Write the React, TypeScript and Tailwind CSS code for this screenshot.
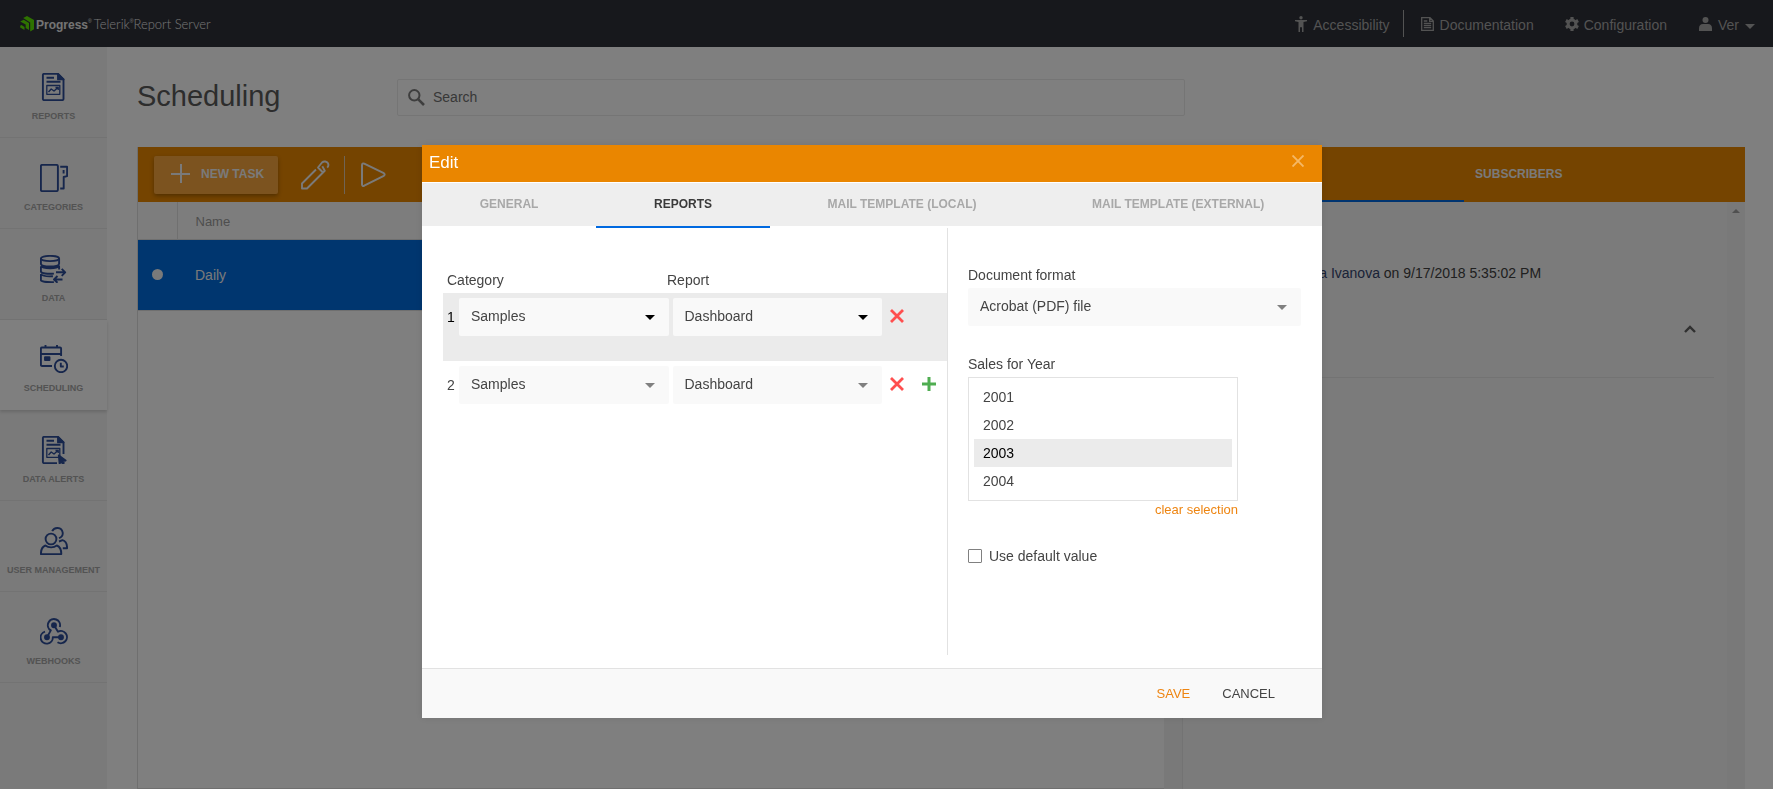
import type { ReactNode } from "react";

function NavIcon({ children }: { children: ReactNode }) {
  return (
    <svg
      width="28"
      height="28"
      viewBox="0 0 28 28"
      fill="none"
      stroke="#2d4d98"
      strokeWidth="1.900"
      strokeLinejoin="round"
      aria-hidden="true"
    >
      {children}
    </svg>
  );
}

function ReportShapes() {
  return (
    <>
      <path d="M18 .9l5.500 5.500H18z" fill="#2d4d98" />
      <path d="M6.500 4.800h7.500M6.500 8.800h14" />
      <rect x="6.800" y="12.500" width="13" height="8.800" strokeWidth="1.300" />
      <path d="M8.500 19l2.700-3 2.800 2 4-3.500M15.500 14.500h2.700v2.500" strokeWidth="1.400" />
    </>
  );
}

const navItems: { label: string; icon: ReactNode; active?: boolean }[] = [
  {
    label: "REPORTS",
    icon: (
      <NavIcon>
        <path d="M4 .9h14l5.500 5.500V26q0 1.100-1.100 1.100H4q-1.100 0-1.100-1.100V2Q2.900.9 4 .9z" />
        <ReportShapes />
      </NavIcon>
    ),
  },
  {
    label: "CATEGORIES",
    icon: (
      <NavIcon>
        <rect x=".9" y=".9" width="17" height="26.200" rx="1.300" />
        <path d="M20.200 2.800h6.900v9.400l-3.400.8v11.500h-3.500M23.600 9.500V6" />
      </NavIcon>
    ),
  },
  {
    label: "DATA",
    icon: (
      <NavIcon>
        <ellipse cx="10" cy="3.500" rx="9.100" ry="2.600" />
        <path d="M.9 3.500v5.200c0 3.600 18.200 3.600 18.200 0V3.500M.9 11.200v5c0 2.200 7 3 13 2.400M.9 11.200c2 2.600 16 2.800 18.200 0v3.300M.9 19v6c0 1.500 5 2.300 13 2.100M.9 19c2 2.300 8 2.500 12 2.200" />
        <path d="M16 17.300h9M21.700 13.800l3.500 3.500-3.500 3.500M22.500 24.500H14M17.500 21l-3.500 3.500 3.500 3.300" />
      </NavIcon>
    ),
  },
  {
    label: "SCHEDULING",
    active: true,
    icon: (
      <NavIcon>
        <path d="M12 21H2q-1.100 0-1.100-1.100V3.600Q.9 2.500 2 2.500h18q1.100 0 1.100 1.100V11M.9 9h20.200M5.500 0v2.500M17 0v2.500" />
        <rect x="5" y="12.300" width="4.500" height="2.800" fill="#2d4d98" />
        <circle cx="21" cy="21" r="6.200" />
        <path d="M20.800 17.800v3.700h3" />
      </NavIcon>
    ),
  },
  {
    label: "DATA ALERTS",
    icon: (
      <NavIcon>
        <path d="M17 27.100H4q-1.100 0-1.100-1.100V2Q2.900.9 4 .9h14l5.500 5.500V18" />
        <ReportShapes />
        <path d="M18.800 19.500l6.800 5-3 .5 1.200 2-1 .6-1.400-2-1.800 1.800z" fill="#2d4d98" />
      </NavIcon>
    ),
  },
  {
    label: "USER MANAGEMENT",
    icon: (
      <NavIcon>
        <circle cx="11" cy="12" r="5.400" />
        <path d="M.9 27.100h20.400c0-4.500-1.500-7.500-4.500-8.600-3 2.500-8.400 2.500-11.400 0C2.400 19.600.9 22.600.9 27.100z" />
        <path d="M12.200 4.200c2-4.500 9.500-4.500 10.500 1.500.3 2.500-1 4.500-3.700 5.500M19 14.500l3.500-1.300c3.300.8 4.600 4.500 4.600 8h-4.300" />
      </NavIcon>
    ),
  },
  {
    label: "WEBHOOKS",
    icon: (
      <NavIcon>
        <g fill="#2d4d98">
          <circle cx="14" cy="7.200" r="2" />
          <circle cx="7" cy="19.200" r="2" />
          <circle cx="21" cy="19.200" r="2" />
        </g>
        <path d="M19.800 8.900A6.100 6.100 0 1 0 10.800 12.400L7 19.200M5 13.700A6.100 6.100 0 1 0 12.800 19.200H21M17.500 24.200A6.100 6.100 0 1 0 18 13.700L14 7.200" />
      </NavIcon>
    ),
  },
];

function TopBar() {
  return (
    <header className="flex h-[47px] shrink-0 items-center bg-[#2e3038] text-sm text-[#a6a6a6]">
      <a href="#home" className="flex items-center pl-5 text-[#e8e8e8]">
        <svg width="14" height="16" viewBox="0 0 14 16" fill="#5ce500" aria-hidden="true">
          <path d="M3.200 2L7 0l7 3.900v9.300l-3.800 2.300V6.400z" />
          <path d="M.2 5.400L3.800 3.700 9 6.900v7.200l-3.300-2V8.500z" />
          <path d="M.2 9.800l1.300-.7 3 1.800v3L.2 11.600z" />
        </svg>
        <span className="ml-[2px] pt-[2px] text-xs font-bold">Progress</span>
        <sup className="text-[5px]">®</sup>
        <span className="ml-[2px] pt-[2px] font-['Lato'] text-[13px] font-light">Telerik</span>
        <sup className="text-[5px]">®</sup>
        <span className="pt-[2px] font-['Lato'] text-[13px] font-light">Report Server</span>
      </a>
      <nav className="ml-auto flex items-center pt-[3px] pr-[18px]">
        <a href="#accessibility" className="flex items-center gap-[6px]">
          <svg width="12" height="16" viewBox="0 0 12 16" fill="currentColor" className="-mt-[2px]" aria-hidden="true">
            <circle cx="6" cy="1.800" r="1.700" />
            <path d="M0 4h12v1.300l-3.500.6V16H7v-4.800H5V16H3.500V5.900L0 5.300z" />
          </svg>
          Accessibility
        </a>
        <span className="-mt-[3px] ml-[13px] h-[27px] w-px bg-[#a6a6a6]" />
        <a href="#documentation" className="ml-[17px] flex items-center gap-[6px]">
          <svg
            width="13"
            height="14"
            viewBox="0 0 13 14"
            fill="none"
            stroke="currentColor"
            strokeWidth="1.300"
            className="-mt-[2px]"
            aria-hidden="true"
          >
            <path d="M.7.700h8.300l3.300 3.300v9.300H.7zM8.700.7v3.600h3.600M2.800 4h3.500M2.800 6.300h7.400M2.800 8.500h7.400M2.800 10.700h7.400" />
          </svg>
          Documentation
        </a>
        <a href="#configuration" className="ml-[31px] flex items-center gap-[5px]">
          <svg width="14" height="14" viewBox="0 0 14 14" className="-mt-[2px]" aria-hidden="true">
            <circle cx="7" cy="7" r="3.900" fill="none" stroke="currentColor" strokeWidth="3" />
            <path
              d="M7 0v2.500M7 11.500V14M.9 3.500l2.200 1.300M10.900 9.200l2.200 1.300M.9 10.500l2.200-1.300M10.900 4.800l2.200-1.300"
              stroke="currentColor"
              strokeWidth="3.200"
            />
          </svg>
          Configuration
        </a>
        <button type="button" className="ml-8 flex items-center gap-[6px]">
          <svg width="13" height="14" viewBox="0 0 13 14" fill="currentColor" className="-mt-[2px]" aria-hidden="true">
            <circle cx="6.500" cy="3" r="3" />
            <path d="M0 14v-2.500Q0 7 4 7h5q4 0 4 4.500V14z" />
          </svg>
          Ver
          <svg width="10" height="5" viewBox="0 0 10 5" fill="currentColor" className="mt-[3px]" aria-hidden="true">
            <path d="M0 0h10L5 5z" />
          </svg>
        </button>
      </nav>
    </header>
  );
}

function SideBar() {
  return (
    <nav className="w-[107px] shrink-0 bg-[#f4f4f4]">
      {navItems.map((item) => (
        <a
          key={item.label}
          href="#section"
          className={
            item.active
              ? "relative flex h-[90px] flex-col items-center bg-white pt-[25px] text-[9px] font-bold text-[#a6a6a6] shadow-[0_2px_3px_rgba(0,0,0,0.15)]"
              : "flex h-[91px] flex-col items-center border-b border-[#e6e6e6] pt-[26px] text-[9px] font-bold text-[#a6a6a6]"
          }
        >
          {item.icon}
          <span className="mt-[9px] leading-3 whitespace-nowrap">{item.label}</span>
        </a>
      ))}
    </nav>
  );
}

function TaskList() {
  return (
    <section className="flex-1 border-b border-l border-[#dedede]">
      <div className="flex h-[55px] items-center bg-[#ea8800] pl-4 text-[#f4f4f4]">
        <button
          type="button"
          className="flex h-[38px] w-[124px] items-center rounded-xs bg-[#f8a63e] pb-[2px] pl-[17px] text-xs font-bold shadow-[0_2px_4px_rgba(0,0,0,0.3)]"
        >
          <svg width="19" height="19" viewBox="0 0 19 19" stroke="currentColor" strokeWidth="2" aria-hidden="true">
            <path d="M0 10h19M10 0v19" />
          </svg>
          <span className="ml-[11px]">NEW TASK</span>
        </button>
        <button type="button" aria-label="Edit task" className="ml-[22px]">
          <svg
            width="30"
            height="30"
            viewBox="0 0 30 30"
            fill="none"
            stroke="currentColor"
            strokeWidth="1.900"
            strokeLinejoin="round"
            aria-hidden="true"
          >
            <path d="M16 9.500L2 23.500v5h5L23.500 12M17.500 7l5.500 5.500 1.800-1.700-2.500-4.500M18 7.500l4-5c1.800-1.700 4.800-1.200 6 .8.800 1.700.3 3.200-.8 4.300" />
          </svg>
        </button>
        <span className="ml-[14px] h-[38px] w-px bg-[#e0c8a8]" />
        <button type="button" aria-label="Run task" className="ml-[15px]">
          <svg
            width="26"
            height="26"
            viewBox="0 0 26 26"
            fill="none"
            stroke="currentColor"
            strokeWidth="2"
            strokeLinejoin="round"
            aria-hidden="true"
          >
            <path d="M2 3q.2-2.200 2.200-1.300L23.800 11.200q1.700 1.300 0 2.600L4.200 23.700Q2.200 24.500 2 22.500z" />
          </svg>
        </button>
      </div>
      <table className="w-full border-collapse text-left">
        <thead>
          <tr className="h-[37px] border-b border-[#dedede] bg-[#fbfbfb] text-[13px] text-[#9c9c9c]">
            <th aria-label="Status" className="w-[39px] border-r border-[#e0e0e0]" />
            <th className="pt-[2px] pl-[18px] font-normal">Name</th>
          </tr>
        </thead>
        <tbody>
          <tr className="h-[71px] border-b border-[#dedede] bg-[#006cde] text-sm text-[#f4f4f4]">
            <td>
              <span className="mx-auto block size-[11px] rounded-full bg-[#f4f4f4]" />
            </td>
            <td className="pl-[18px]">Daily</td>
          </tr>
        </tbody>
      </table>
    </section>
  );
}

function DetailsPanel() {
  return (
    <section className="flex w-[35%] flex-col border-l border-[#e6e6e6] bg-[#f6f6f6]">
      <div role="tablist" className="flex h-[55px] bg-[#ea8800] text-xs font-bold text-[#f4f4f4]">
        <button type="button" role="tab" aria-label="Activities" className="w-1/2 border-b-2 border-[#0069e0]" />
        <button type="button" role="tab" className="px-[11px] pb-[2px]">
          SUBSCRIBERS
        </button>
      </div>
      <div className="flex flex-1">
        <div className="flex-1 pr-[13px] text-sm text-[#404040]">
          <p className="pt-[61px] pl-[136px] leading-5">
            <a href="#user" className="text-[#34456e]">
              a Ivanova
            </a>{" "}
            on 9/17/2018 5:35:02 PM
          </p>
          <div className="flex h-[95px] justify-end border-b border-[#e6e6e6] pr-[18px] pb-[2px]">
            <button type="button" aria-label="Collapse">
              <svg width="12" height="8" viewBox="0 0 12 8" fill="none" stroke="#606060" strokeWidth="2.400" aria-hidden="true">
                <path d="M1 7l5-5 5 5" />
              </svg>
            </button>
          </div>
        </div>
        <div className="w-[18px] bg-[#f2f2f2] pt-[7px]">
          <svg width="8" height="4" viewBox="0 0 8 4" fill="#a0a0a0" className="mx-auto" aria-hidden="true">
            <path d="M4 0l4 4H0z" />
          </svg>
        </div>
      </div>
    </section>
  );
}

function DropDown({ label, value, dark }: { label: string; value: string; dark?: boolean }) {
  return (
    <div className="relative flex-1">
      <select
        aria-label={label}
        defaultValue={value}
        className="h-[38px] w-full appearance-none rounded-xs bg-[#f9f9f9] pr-8 pb-[2px] pl-3 text-sm text-[#444444]"
      >
        <option>{value}</option>
      </select>
      <svg
        width="10"
        height="5"
        viewBox="0 0 10 5"
        className={
          dark
            ? "pointer-events-none absolute top-[17px] right-[14px] fill-black"
            : "pointer-events-none absolute top-[17px] right-[14px] fill-[#808080]"
        }
        aria-hidden="true"
      >
        <path d="M0 0h10L5 5z" />
      </svg>
    </div>
  );
}

function ReportRow({ index, selected, last }: { index: number; selected?: boolean; last?: boolean }) {
  return (
    <div className={selected ? "flex h-[68px] bg-[#ebebeb] pt-[5px] text-black" : "flex h-[68px] pt-[5px] text-[#444444]"}>
      <span className="w-4 pt-[9px] pl-1 leading-5">{index}</span>
      <div className="flex flex-1 gap-1">
        <DropDown label="Category" value="Samples" dark={selected} />
        <DropDown label="Report" value="Dashboard" dark={selected} />
      </div>
      <div className="flex h-[35px] w-[65px] items-center gap-[18px] pl-2">
        <button type="button" aria-label="Remove report">
          <svg width="14" height="14" viewBox="0 0 14 14" stroke="#ff4f4f" strokeWidth="2.800" aria-hidden="true">
            <path d="M1 1l12 12M13 1L1 13" />
          </svg>
        </button>
        {last && (
          <button type="button" aria-label="Add report">
            <svg width="14" height="14" viewBox="0 0 14 14" stroke="#4fad51" strokeWidth="3" aria-hidden="true">
              <path d="M0 7h14M7 0v14" />
            </svg>
          </button>
        )}
      </div>
    </div>
  );
}

const dialogTabs = ["GENERAL", "REPORTS", "MAIL TEMPLATE (LOCAL)", "MAIL TEMPLATE (EXTERNAL)"];
const years = ["2001", "2002", "2003", "2004"];

function EditDialog() {
  return (
    <div className="fixed inset-0 flex items-start justify-center bg-black/50 pt-[145px] pr-[29px]">
      <div
        role="dialog"
        aria-label="Edit"
        className="w-[900px] bg-white text-sm text-[#444444] shadow-[0_0_8px_rgba(0,0,0,0.1)]"
      >
        <div className="flex h-[37px] items-start justify-between bg-[#ea8600] pt-2 pr-[18px] pl-[7px] text-white">
          <h2 className="text-[17px] leading-5">Edit</h2>
          <button type="button" aria-label="Close" className="pt-[2px]">
            <svg width="12" height="12" viewBox="0 0 12 12" stroke="#f5b865" strokeWidth="1.900" aria-hidden="true">
              <path d="M.5.500l11 11M11.500.500l-11 11" />
            </svg>
          </button>
        </div>
        <div role="tablist" className="mt-px flex h-[45px] text-xs font-bold">
          {dialogTabs.map((tab) => (
            <div key={tab} className="flex flex-auto flex-col">
              <button
                type="button"
                role="tab"
                aria-selected={tab === "REPORTS"}
                className={
                  tab === "REPORTS"
                    ? "h-[43px] bg-[#eeeeee] pb-[2px] text-[#3a3a3a]"
                    : "h-[43px] bg-[#eeeeee] pb-[2px] text-[#a8a8a8]"
                }
              >
                {tab}
              </button>
              {tab === "REPORTS" && <span className="h-[2px] bg-[#0069e0]" />}
            </div>
          ))}
        </div>
        <div className="flex h-[440px] pb-[13px]">
          <div className="w-[526px] border-r border-[#e2e2e2] pt-[42px] pl-[21px]">
            <div className="flex h-[23px] pl-1 leading-5">
              <span className="w-[220px]">Category</span>
              <span>Report</span>
            </div>
            <ReportRow index={1} selected />
            <ReportRow index={2} last />
          </div>
          <div className="flex flex-1 flex-col pt-[37px] pr-[21px] pl-5">
            <span className="mb-[3px] leading-5">Document format</span>
            <div className="flex">
              <DropDown label="Document format" value="Acrobat (PDF) file" />
            </div>
            <span id="sales-year" className="mt-[28px] mb-[3px] leading-5">
              Sales for Year
            </span>
            <div className="flex w-[270px] flex-col">
              <div
                role="listbox"
                aria-labelledby="sales-year"
                className="flex flex-col border border-[#e2e2e2] p-[5px]"
              >
                {years.map((year) => (
                  <button
                    key={year}
                    type="button"
                    role="option"
                    aria-selected={year === "2003"}
                    className={
                      year === "2003" ? "h-7 bg-[#ebebeb] pl-[9px] text-left text-black" : "h-7 pl-[9px] text-left"
                    }
                  >
                    {year}
                  </button>
                ))}
              </div>
              <button type="button" className="self-end text-[13px] leading-[18px] text-[#ee8511]">
                clear selection
              </button>
            </div>
            <label className="mt-[27px] flex items-center gap-[7px] leading-5">
              <input
                type="checkbox"
                className="size-[14px] appearance-none rounded-[1px] border border-[#808080] bg-white"
              />
              Use default value
            </label>
          </div>
        </div>
        <div className="flex h-[50px] items-center justify-end gap-8 border-t border-[#e2e2e2] bg-[#f9f9f9] pt-px pr-[47px] text-[13px]">
          <button type="button" className="text-[#ee8511]">
            SAVE
          </button>
          <button type="button">CANCEL</button>
        </div>
      </div>
    </div>
  );
}

export default function App() {
  return (
    <div className="flex h-screen flex-col overflow-hidden bg-white font-['Liberation_Sans',sans-serif]">
      <TopBar />
      <div className="flex flex-1">
        <SideBar />
        <main className="flex flex-1 flex-col pr-7 pl-[30px]">
          <div className="flex h-[100px] items-center">
            <h1 className="w-[260px] text-[29px] text-[#5a5a5a]">Scheduling</h1>
            <label className="flex h-[37px] w-[788px] items-center rounded-xs border border-[#eaeaea]">
              <svg
                width="17"
                height="17"
                viewBox="0 0 17 17"
                fill="none"
                stroke="#7c7c7c"
                className="ml-[10px] shrink-0"
                aria-hidden="true"
              >
                <circle cx="6.300" cy="6.300" r="5.200" strokeWidth="2" />
                <path d="M10.300 10.300l5.700 5.700" strokeWidth="2.600" />
              </svg>
              <input
                type="search"
                aria-label="Search"
                placeholder="Search"
                className="ml-2 min-w-0 flex-1 text-sm placeholder:text-[#707070]"
              />
            </label>
          </div>
          <div className="flex flex-1">
            <TaskList />
            <div className="w-[18px] shrink-0 bg-[#f2f2f2]" />
            <DetailsPanel />
          </div>
        </main>
      </div>
      <EditDialog />
    </div>
  );
}
